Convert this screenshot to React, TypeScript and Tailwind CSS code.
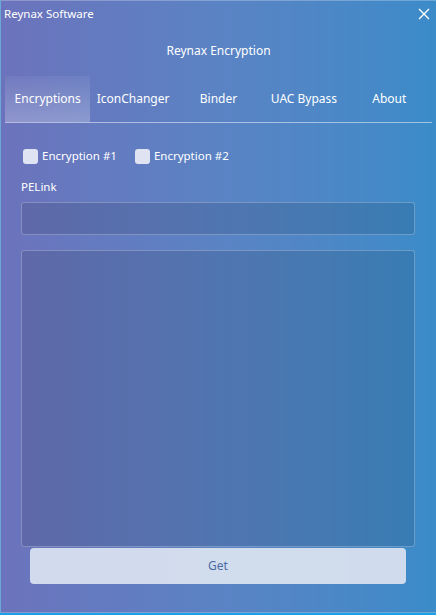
import React from "react";

const tabs = ["Encryptions", "IconChanger", "Binder", "UAC Bypass", "About"];

export default function App() {
  return (
    <div
      className="w-[436px] h-[615px] flex flex-col text-white text-[11.5px] overflow-hidden"
      style={{ fontFamily: '"Noto Sans", "Open Sans", sans-serif' }}
    >
      <div className="relative flex-1 flex flex-col bg-gradient-to-r from-[#6b73bc] via-[#5a83c4] to-[#3b8bc9] border-t border-l border-b border-white/25">
        {/* title bar */}
        <div className="h-[25px] flex items-center justify-between pl-[3px] pr-[5px]">
          <span className="text-[11.5px] leading-none">Reynax Software</span>
          <svg width="12" height="12" viewBox="0 0 12 12" className="mr-[1px]">
            <path d="M1 1 L11 11 M11 1 L1 11" stroke="white" strokeWidth="1.4" />
          </svg>
        </div>
        <div className="h-[50px] flex items-center justify-center text-[12px]">Reynax Encryption</div>
        {/* tabs */}
        <div className="mx-[4px] grid grid-cols-5 h-[47px] border-b border-white/50 text-[12px]">
          {tabs.map((t, i) => (
            <div
              key={t}
              className={
                "flex items-center justify-center " +
                (i === 0 ? "bg-gradient-to-b from-white/5 to-white/25" : "")
              }
            >
              {t}
            </div>
          ))}
        </div>
        {/* checkboxes */}
        <div className="flex items-center mt-[25px] ml-[22px] h-[16px] gap-[18px]">
          <label className="flex items-center gap-[4px]">
            <span className="w-[15px] h-[15px] rounded-[3px] bg-[#dfe3f2]" />
            <span>Encryption #1</span>
          </label>
          <label className="flex items-center gap-[4px]">
            <span className="w-[15px] h-[15px] rounded-[3px] bg-[#dfe3f2]" />
            <span>Encryption #2</span>
          </label>
        </div>
        <div className="ml-[20px] mt-[17px] leading-none">PELink</div>
        <div className="ml-[20px] mr-[21px] mt-[9px] h-[33px] rounded-[3px] border border-white/25 bg-black/10" />
        <div className="ml-[20px] mr-[21px] mt-[15px] h-[297px] rounded-[3px] border border-white/25 bg-black/10" />
        <div className="ml-[29px] mr-[30px] mt-[1px] h-[36px] rounded-[4px] bg-[#d8e0ef]/95 flex items-center justify-center text-[#4a6ba6] text-[12px]">
          Get
        </div>
      </div>
      <div className="h-[2px] bg-[#1aa0e6]" />
    </div>
  );
}
